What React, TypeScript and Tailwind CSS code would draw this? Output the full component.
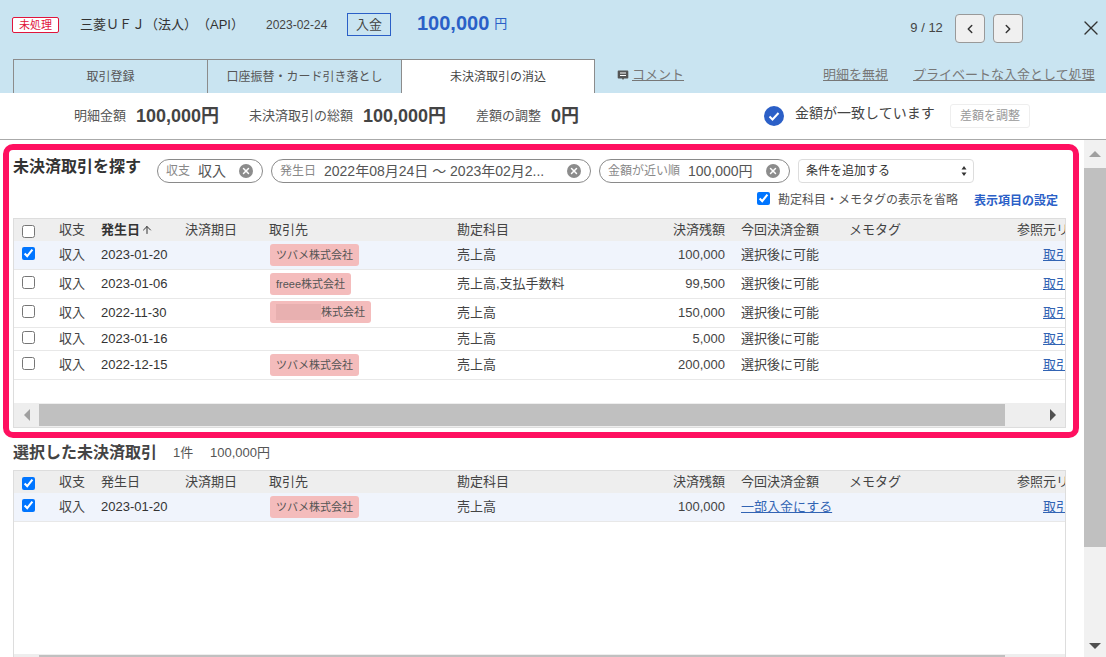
import { ChevronLeft, ChevronRight, X, ArrowUp } from "lucide-react";

type Row = { date: string; partner?: string; masked?: boolean; account: string; rest: string; h: string };

const rows: Row[] = [
  { date: "2023-01-20", partner: "ツバメ株式会社", account: "売上高", rest: "100,000", h: "h-[29px]" },
  { date: "2023-01-06", partner: "freee株式会社", account: "売上高,支払手数料", rest: "99,500", h: "h-[29px]" },
  { date: "2022-11-30", partner: "株式会社", masked: true, account: "売上高", rest: "150,000", h: "h-[29px]" },
  { date: "2023-01-16", account: "売上高", rest: "5,000", h: "h-[23px]" },
  { date: "2022-12-15", partner: "ツバメ株式会社", account: "売上高", rest: "200,000", h: "h-[29px]" },
];

const gridCols = "grid grid-cols-[45px_42px_84px_84px_188px_184px_100px_108px_168px_80px] items-center";

function TableHead({ checked, sorted }: { checked?: boolean; sorted?: boolean }) {
  return (
    <div className={`${gridCols} h-[22px] shrink-0 bg-[#eeeeee] text-[13px] text-[#444] whitespace-nowrap`}>
      <div className="flex items-center pl-[8px] pt-[2px]">
        <input type="checkbox" defaultChecked={checked} className="w-[13px] h-[13px] m-0" />
      </div>
      <span>収支</span>
      {sorted ? (
        <span className="flex items-center font-bold text-[#333]">
          発生日
          <ArrowUp className="w-[12px] h-[12px] ml-[1px]" strokeWidth={2} />
        </span>
      ) : (
        <span>発生日</span>
      )}
      <span>決済期日</span>
      <span>取引先</span>
      <span>勘定科目</span>
      <span className="text-right pr-[16px]">決済残額</span>
      <span>今回決済金額</span>
      <span>メモタグ</span>
      <span>参照元リンク</span>
    </div>
  );
}

function Tag({ row }: { row: Row }) {
  if (!row.partner) return <span />;
  return (
    <div className="pl-[1px]">
      <span className="inline-flex items-center h-[22px] px-[6px] rounded-[3px] bg-[#f4bcbc] text-[11px] text-[#555] whitespace-nowrap">
        {row.masked && <span className="w-[45px] h-[16px] bg-[#e8b0b0]" />}
        {row.partner}
      </span>
    </div>
  );
}

function TableRow({ row, checked, selected }: { row: Row; checked?: boolean; selected?: boolean }) {
  return (
    <div className={`${gridCols} ${row.h} border-b border-[#e8e8e8] text-[13px] text-[#444] whitespace-nowrap ${checked ? "bg-[#f0f4fc]" : "bg-white"}`}>
      <div className="flex items-center pl-[8px] pb-[3px]">
        <input type="checkbox" defaultChecked={checked} className="w-[13px] h-[13px] m-0" />
      </div>
      <span className="pb-[1px]">収入</span>
      <span className="pb-[1px] text-[#333]">{row.date}</span>
      <span />
      <Tag row={row} />
      <span className="pb-[1px]">{row.account}</span>
      <span className="text-right pr-[16px] pb-[1px]">{row.rest}</span>
      {selected ? (
        <a className="underline text-[#3264b4] pb-[1px]">一部入金にする</a>
      ) : (
        <span className="pb-[1px]">選択後に可能</span>
      )}
      <span />
      <a className="underline text-[#3264b4] pl-[26px] pb-[1px]">取引</a>
    </div>
  );
}

function HScroll() {
  return (
    <div className="flex h-[24px] bg-[#eeeeee] pt-[1px] pb-[1px] shrink-0">
      <div className="w-[25px] flex items-center justify-center">
        <span className="w-0 h-0 border-y-[6px] border-y-transparent border-r-[6px] border-r-[#a0a0a0]" />
      </div>
      <div className="w-[966px] bg-[#c0c0c0]" />
      <div className="flex-1 flex items-center justify-end pr-[9px]">
        <span className="w-0 h-0 border-y-[6px] border-y-transparent border-l-[6px] border-l-[#505050]" />
      </div>
    </div>
  );
}

function Pill({ label, value, className }: { label: string; value: string; className: string }) {
  return (
    <div className={`flex items-center h-[24px] rounded-full border border-[#8a8a8a] pl-[8px] pr-[9px] whitespace-nowrap ${className}`}>
      <span className="text-[12px] text-[#888] mr-[8px]">{label}</span>
      <span className="text-[14px] text-[#555] flex-1">{value}</span>
      <span className="flex items-center justify-center w-[14px] h-[14px] rounded-full bg-[#8c8c8c]">
        <X className="w-[10px] h-[10px] text-white" strokeWidth={3.5} />
      </span>
    </div>
  );
}

export default function App() {
  return (
    <div className="w-[1106px] h-[657px] overflow-hidden flex flex-col bg-white text-[#333] font-['Liberation_Sans','Noto_Sans_CJK_JP',sans-serif]">
      {/* header */}
      <div className="h-[93px] bg-[#c9e4f1] shrink-0 flex flex-col">
        <div className="h-[59px] flex items-start whitespace-nowrap">
          <span className="mt-[17px] ml-[12px] w-[47px] h-[16px] flex items-center justify-center bg-white border border-[#e0153c] rounded-[2px] text-[11px] text-[#e0153c]">未処理</span>
          <span className="mt-[16px] ml-[21px] w-[186px] text-[13px] leading-[18px] text-[#333] [text-spacing-trim:space-all]">三菱ＵＦＪ（法人）（API）</span>
          <span className="mt-[16px] text-[12px] leading-[18px] text-[#444] w-[81px]">2023-02-24</span>
          <span className="mt-[13px] w-[44px] h-[23px] flex items-center justify-center border border-[#2b5fc7] text-[13px] text-[#444]">入金</span>
          <span className="mt-[11px] ml-[26px] text-[20px] leading-[24px] font-bold text-[#2b5fc7]">100,000</span>
          <span className="mt-[15px] ml-[5px] text-[13px] leading-[18px] text-[#2b5fc7]">円</span>
          <span className="mt-[19px] ml-[403px] text-[13px] leading-[18px] text-[#444] w-[45px]">9 / 12</span>
          <button className="mt-[14px] w-[30px] h-[29px] flex items-center justify-center bg-[#f0f0f0] border border-[#999] rounded-[4px]">
            <ChevronLeft className="w-[14px] h-[14px] text-[#333]" strokeWidth={2.5} />
          </button>
          <button className="mt-[14px] ml-[8px] w-[30px] h-[29px] flex items-center justify-center bg-[#f0f0f0] border border-[#999] rounded-[4px]">
            <ChevronRight className="w-[14px] h-[14px] text-[#333]" strokeWidth={2.5} />
          </button>
          <X className="mt-[16px] ml-[56px] w-[24px] h-[24px] text-[#333] shrink-0" strokeWidth={1.4} />
        </div>
        <div className="h-[34px] flex items-stretch pl-[13px] whitespace-nowrap">
          <div className="w-[194px] flex items-center justify-center border-t border-l border-[#8c8c8c] text-[12px] text-[#555]">取引登録</div>
          <div className="w-[194px] flex items-center justify-center border-t border-l border-[#8c8c8c] text-[12px] text-[#555]">口座振替・カード引き落とし</div>
          <div className="w-[194px] flex items-center justify-center bg-white border-t border-x border-[#8c8c8c] text-[12px] text-[#444]">未決済取引の消込</div>
          <div className="flex items-center pb-[3px] text-[13px] text-[#777]">
            <svg viewBox="0 0 12 12" className="ml-[22px] w-[12px] h-[12px]">
              <path d="M1.5 1.5h9a.8.8 0 0 1 .8.8v6.4a.8.8 0 0 1-.8.8H7l-1 1.5-1-1.5H1.5a.8.8 0 0 1-.8-.8V2.300a.8.8 0 0 1 .8-.8z" fill="#555" />
              <path d="M3 4h6M3 6.500h6" stroke="#fff" strokeWidth="1" />
            </svg>
            <a className="ml-[3px] underline">コメント</a>
            <a className="ml-[139px] underline">明細を無視</a>
            <a className="ml-[25px] underline">プライベートな入金として処理</a>
          </div>
        </div>
      </div>

      {/* summary */}
      <div className="h-[47px] shrink-0 flex items-center border-b border-[#aaaaaa] text-[13px] text-[#555] pl-[74px] whitespace-nowrap">
        <span>明細金額</span>
        <span className="ml-[10px] text-[18px] font-bold text-[#444] w-[113px]">100,000円</span>
        <span>未決済取引の総額</span>
        <span className="ml-[10px] text-[18px] font-bold text-[#444] w-[113px]">100,000円</span>
        <span>差額の調整</span>
        <span className="ml-[10px] text-[18px] font-bold text-[#444] w-[213px]">0円</span>
        <svg viewBox="0 0 20 20" className="w-[20px] h-[20px]">
          <circle cx="10" cy="10" r="10" fill="#2b5fc7" />
          <path d="M5.500 10.500l3 3 6-6.500" fill="none" stroke="#fff" strokeWidth="2" />
        </svg>
        <span className="ml-[11px] pb-[5px] text-[14px] text-[#444] w-[155px]">金額が一致しています</span>
        <button className="w-[80px] h-[24px] border border-[#eeeeee] rounded-[3px] text-[12px] text-[#999]">差額を調整</button>
      </div>

      {/* body */}
      <div className="flex-1 min-h-0 flex">
        <div className="w-[1084px] shrink-0 overflow-hidden">
          {/* search section with the annotation frame */}
          <div className="mt-[4px] ml-[3px] w-[1076px] h-[294px] border-[6px] border-[#ff1060] rounded-[10px] pt-[9px] pl-[4px] pr-[7px]">
            <div className="flex items-start whitespace-nowrap">
              <h2 className="text-[16px] leading-[16px] font-bold text-[#333] w-[144px]">未決済取引を探す</h2>
              <Pill label="収支" value="収入" className="w-[106px]" />
              <Pill label="発生日" value="2022年08月24日 〜 2023年02月2..." className="w-[320px] ml-[8px]" />
              <Pill label="金額が近い順" value="100,000円" className="w-[191px] ml-[8px]" />
              <div className="ml-[8px] w-[176px] h-[24px] flex items-center justify-between pl-[7px] pr-[6px] border border-[#dddddd] rounded-[4px] text-[12px] text-[#333]">
                <span>条件を追加する</span>
                <svg viewBox="0 0 6 10" className="w-[6px] h-[10px]">
                  <path d="M3 0l2.500 3.500h-5zM3 10L.5 6.500h5z" fill="#333" />
                </svg>
              </div>
            </div>
            <div className="h-[35px] flex items-center justify-end whitespace-nowrap pr-[8px]">
              <input type="checkbox" defaultChecked className="w-[13px] h-[13px] m-0 mb-[4px]" />
              <span className="ml-[8px] pb-[2px] text-[12px] text-[#555]">勘定科目・メモタグの表示を省略</span>
              <a className="ml-[16px] text-[12px] font-bold text-[#2b5fc7]">表示項目の設定</a>
            </div>
            <div className="h-[210px] border border-[#dddddd] overflow-hidden flex flex-col">
              <TableHead sorted />
              <div className="flex-1">
                {rows.map((row, i) => (
                  <TableRow key={row.date} row={row} checked={i === 0} />
                ))}
              </div>
              <HScroll />
            </div>
          </div>

          {/* selected section */}
          <div className="pl-[13px] pr-[18px]">
            <div className="h-[32px] flex items-center pb-[3px] whitespace-nowrap">
              <h2 className="text-[16px] font-bold text-[#444] w-[160px]">選択した未決済取引</h2>
              <span className="text-[13px] text-[#555] w-[37px]">1件</span>
              <span className="text-[13px] text-[#555]">100,000円</span>
            </div>
            <div className="h-[200px] border border-[#dddddd] overflow-hidden flex flex-col">
              <TableHead checked />
              <div className="h-[161px] shrink-0">
                <TableRow row={rows[0]} checked selected />
              </div>
              <HScroll />
            </div>
          </div>
        </div>

        {/* page scrollbar */}
        <div className="flex-1 bg-[#f1f1f1] flex flex-col items-center">
          <div className="h-[28px] w-full flex items-center justify-center shrink-0">
            <span className="w-0 h-0 border-x-[6px] border-x-transparent border-b-[6px] border-b-[#a0a0a0]" />
          </div>
          <div className="w-full h-[379px] bg-[#c0c0c0] shrink-0" />
          <div className="flex-1 w-full flex items-end justify-center pb-[8px]">
            <span className="w-0 h-0 border-x-[6px] border-x-transparent border-t-[6px] border-t-[#505050]" />
          </div>
        </div>
      </div>
    </div>
  );
}
